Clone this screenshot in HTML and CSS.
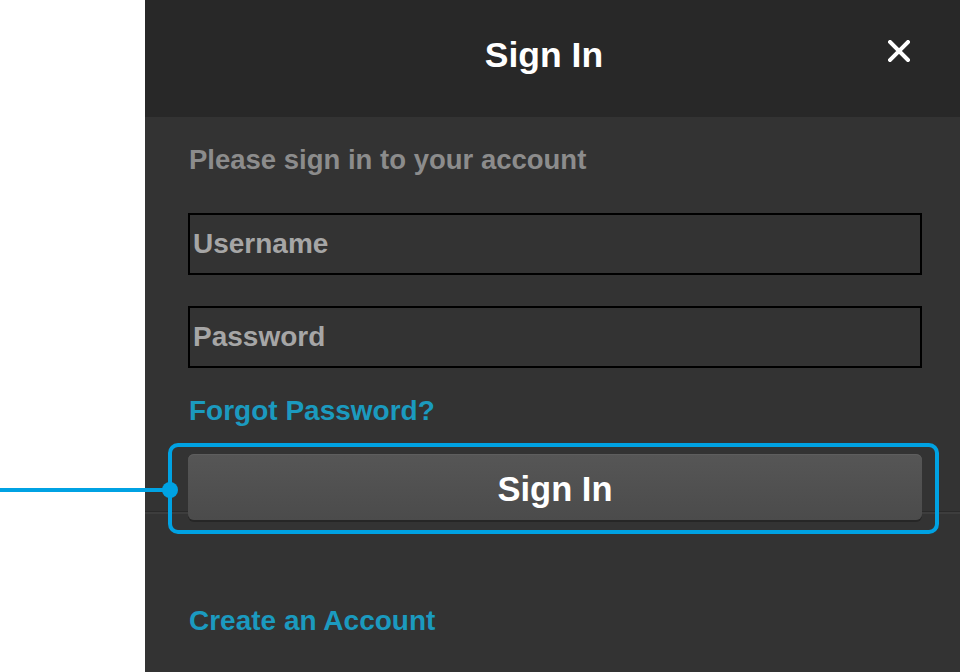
FILE: index.html
```html
<!DOCTYPE html>
<html>
<head>
  <meta charset="utf-8">
  <meta name="viewport" content="width=device-width, initial-scale=1">
  <title>Sign In</title>
  <link rel="stylesheet" href="styles.css">
</head>
<body>
  <div class="page">
    <div class="side"></div>
    <div class="panel">
      <div class="head">
        <h1>Sign In</h1>
        <button class="close" aria-label="Close">
          <svg width="22" height="22" viewBox="0 0 22 22">
            <path d="M2 2 L20 20 M20 2 L2 20" stroke="#fff" stroke-width="4" stroke-linecap="square" fill="none"/>
          </svg>
        </button>
      </div>
      <div class="body">
        <p class="intro">Please sign in to your account</p>
        <div class="field">Username</div>
        <div class="field">Password</div>
        <a class="link forgot" href="#">Forgot Password?</a>
        <div class="action">
          <button class="submit">Sign In</button>
          <div class="callout"></div>
        </div>
        <a class="link create" href="#">Create an Account</a>
      </div>
    </div>
  </div>
</body>
</html>
```

FILE: styles.css
```css
* {
  margin: 0;
  padding: 0;
  box-sizing: border-box;
}

html, body {
  height: 100%;
}

body {
  background: #fff;
  font-family: "Liberation Sans", Arial, sans-serif;
  font-weight: bold;
  overflow: hidden;
}

.page {
  display: flex;
  height: 100%;
}

.side {
  width: 145px;
  flex: none;
}

.panel {
  flex: 1;
  background: #333333;
  display: flex;
  flex-direction: column;
}

.head {
  height: 117px;
  background: #282828;
  display: flex;
  align-items: center;
  justify-content: center;
  position: relative;
}

.head h1 {
  color: #fff;
  font-size: 35.5px;
  line-height: 40px;
  margin-top: -8px;
  margin-right: 17px;
}

.close {
  position: absolute;
  top: 40px;
  right: 50px;
  background: none;
  border: 0;
  width: 22px;
  height: 22px;
  display: flex;
}

.body {
  padding: 26px 38px 0 43px;
  display: flex;
  flex-direction: column;
}

.intro {
  color: #8c8c8c;
  font-size: 27.5px;
  line-height: 34px;
  margin-left: 1px;
}

.field {
  height: 62px;
  border: 2px solid #000;
  color: #a6a6a6;
  font-size: 28px;
  display: flex;
  align-items: center;
  padding-left: 3px;
  margin-top: 36px;
}

.field + .field {
  margin-top: 31px;
}

.link {
  color: #1b9abf;
  font-size: 28px;
  line-height: 34px;
  text-decoration: none;
  margin-left: 1px;
  align-self: flex-start;
}

.forgot {
  margin-top: 26px;
}

.action {
  margin-top: 26px;
  margin-left: -43px;
  margin-right: -38px;
  padding: 0 38px 0 43px;
  position: relative;
  background: linear-gradient(to bottom, transparent 57px, #2a2a2a 57px, #2a2a2a 58px, #3d3d3d 58px, #3d3d3d 60px, transparent 60px);
}

.submit {
  display: block;
  width: 100%;
  height: 66px;
  padding-top: 4px;
  border: 0;
  border-radius: 6px;
  background: linear-gradient(to bottom, #565656, #4b4b4b);
  box-shadow: 0 2px 0 #262626, inset 0 1px 0 #5e5e5e;
  color: #fff;
  font-family: "Liberation Sans", Arial, sans-serif;
  font-weight: bold;
  font-size: 34.5px;
  position: relative;
  z-index: 1;
}

/* annotation overlay */
.callout {
  position: absolute;
  left: 23px;
  right: 21px;
  top: -11px;
  height: 91px;
  border: 4px solid #00a2e3;
  border-radius: 10px;
  z-index: 2;
}

.callout::before {
  content: '';
  position: absolute;
  right: 100%;
  top: 41px;
  width: 172px;
  height: 4px;
  background: #00a2e3;
}

.callout::after {
  content: '';
  position: absolute;
  left: -10px;
  top: 35px;
  width: 16px;
  height: 16px;
  border-radius: 50%;
  background: #00a2e3;
}

.create {
  margin-top: 84px;
}
```
